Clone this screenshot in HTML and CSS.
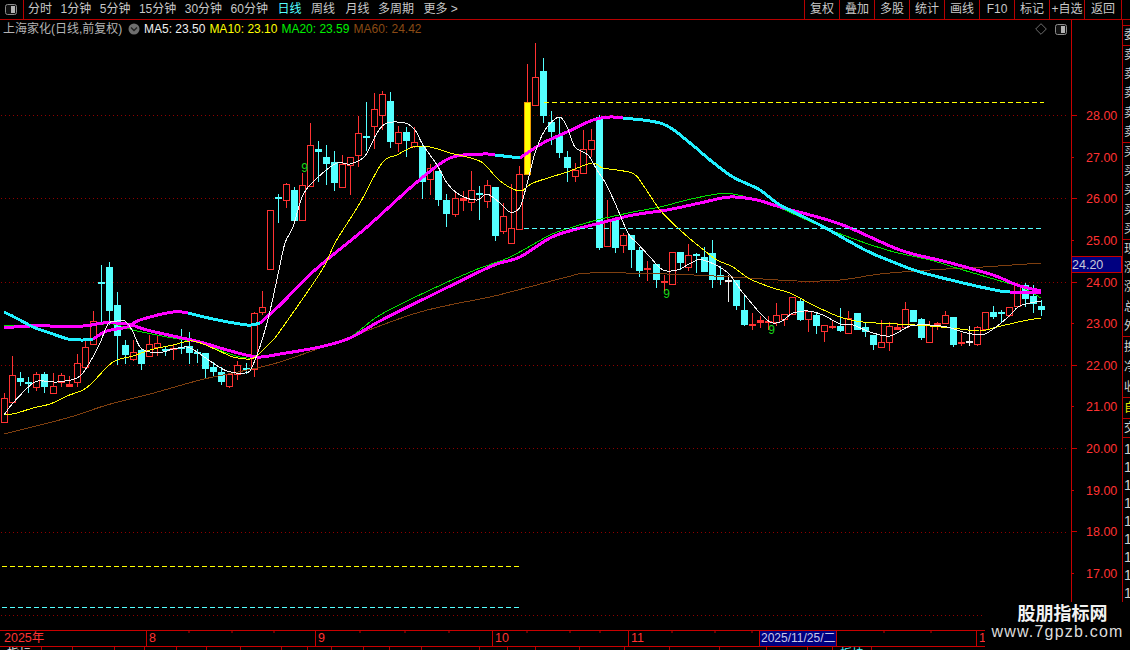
FILE: index.html
```html
<!DOCTYPE html>
<html lang="zh-CN">
<head>
<meta charset="utf-8">
<title>上海家化 日线</title>
<link rel="stylesheet" href="styles.css">
</head>
<body>
<div class="app">
  <header class="topbar">
    <div class="panel-btn">
      <svg class="icon-panel" viewBox="0 0 12 11"><rect x="0.5" y="0.5" width="11" height="10" rx="2" class="panel-frame"/><rect x="6" y="2" width="4" height="7" class="panel-fill"/></svg>
    </div>
    <nav class="tabs">
      <span>分时</span><span>1分钟</span><span>5分钟</span><span>15分钟</span><span>30分钟</span><span>60分钟</span><span class="active nudge">日线</span><span class="nudge">周线</span><span class="nudge-wide">月线</span><span>多周期</span><span class="nudge">更多 &gt;</span>
    </nav>
    <div class="tools">
      <span>复权</span><span>叠加</span><span>多股</span><span>统计</span><span>画线</span><span>F10</span><span>标记</span><span>+自选</span><span class="last">返回</span>
    </div>
  </header>

  <main class="workspace">
    <section class="chart-col">
      <div class="quote">
        <span class="stock">上海家化(日线,前复权)</span>
        <svg class="icon-round" viewBox="0 0 12 12"><circle cx="6" cy="6" r="5.5" class="round-bg"/><path d="M3 4.6 6 7.6 9 4.6" class="round-mark"/></svg>
        <span class="ma ma5">MA5: 23.50</span>
        <span class="ma ma10">MA10: 23.10</span>
        <span class="ma ma20">MA20: 23.59</span>
        <span class="ma ma60">MA60: 24.42</span>
        <span class="quote-icons">
          <svg class="icon-diamond" viewBox="0 0 12 12"><path d="M6 0.7 11.3 6 6 11.3 0.7 6Z"/></svg>
          <svg class="icon-panel" viewBox="0 0 12 11"><rect x="0.5" y="0.5" width="11" height="10" rx="2" class="panel-frame"/><rect x="6" y="2" width="4" height="7" class="panel-fill"/></svg>
        </span>
      </div>
      <svg id="chart" class="chart" viewBox="0 38 1071 592"></svg>
    </section>
    <svg id="axis" class="axis" viewBox="1071 20 51 610"></svg>
    <aside class="strip">
      <div class="gap"></div>
      <div class="group g20"><b>委</b></div>
      <div class="group g97"><b>卖</b><b>卖</b><b>卖</b><b>卖</b><b>卖</b></div>
      <div class="group g97"><b>买</b><b>买</b><b>买</b><b>买</b><b>买</b></div>
      <div class="group g97"><b>现</b><b>涨</b><b>涨</b><b>总</b><b>外</b></div>
      <div class="group g61"><b>换</b><b>净</b><b>收</b></div>
      <div class="group g21 self"><b>自</b></div>
      <div class="group g19"><b>交</b></div>
      <div class="group nums"><b>1</b><b>1</b><b>1</b><b>1</b><b>1</b><b>1</b><b>1</b><b>1</b><b>1</b></div>
    </aside>
  </main>

  <div class="datebar">
    <span>2025年</span><span>8</span><span>9</span><span>10</span><span>11</span><span class="cursor-date">2025/11/25/二</span><span class="blank"></span><span>1</span>
    <svg class="date-ticks" viewBox="0 0 1130 3"><path d="M189 0v2M232 0v2M274 0v2M360 0v2M405 0v2M449 0v2M527 0v2M570 0v2M600 0v2M672 0v2M715 0v2M752 0v2M884 0v2M931 0v2"/></svg>
  </div>
  <div class="indexbar">
    <span>指标</span><span>一</span><span></span><span></span><span></span><span></span><span></span><span></span><span></span><span></span><span></span><span></span><span></span><span></span><span></span><span></span><span></span><span></span><span></span><span></span><span></span><span></span><span></span><span class="hot">板块</span><span></span>
  </div>

  <div class="watermark">
    <strong>股朋指标网</strong>
    <em>www.7gpzb.com</em>
  </div>
</div>
<script src="chart.js"></script>
</body>
</html>
```
FILE: styles.css
```css
* { box-sizing: border-box; }
html, body { margin: 0; padding: 0; background: #000; }
body {
  width: 1130px;
  height: 650px;
  overflow: hidden;
  font: 12px/1 "Liberation Sans", "Noto Sans CJK SC", sans-serif;
  color: #c8c8c8;
}
.app { position: relative; width: 1130px; height: 650px; overflow: hidden; display: flex; flex-direction: column; }

/* top toolbar */
.topbar { flex: 0 0 20px; display: flex; border-bottom: 1px solid #b80000; line-height: 19px; }
.panel-btn { width: 24px; display: flex; align-items: center; padding-left: 5px; border-right: 1px solid #b80000; }
.tabs { display: flex; gap: 8.5px; padding-left: 4px; }
.tabs .active { color: #54ffff; }
.tabs .nudge { margin-left: 1px; }
.tabs .nudge-wide { margin-left: 2px; }
.tools { margin-left: auto; margin-right: 8px; display: flex; }
.tools span { width: 35px; text-align: center; border-left: 1px solid #b80000; white-space: nowrap; }
.tools .last { width: 38px; border-right: 1px solid #b80000; }

.icon-panel { width: 12px; height: 11px; display: block; }
.panel-frame { fill: #111; stroke: #8c8c8c; }
.panel-fill { fill: #b4b4b4; }

/* main area */
.workspace { flex: 0 0 610px; display: flex; }
.chart-col { width: 1071px; display: flex; flex-direction: column; }
.quote { flex: 0 0 18px; display: flex; align-items: center; white-space: nowrap; padding-left: 3px; }
.stock { width: 125px; color: #b4b4b4; }
.icon-round { width: 12px; height: 12px; margin-right: 4px; }
.round-bg { fill: #6e6e6e; }
.round-mark { fill: none; stroke: #222; stroke-width: 1.4; }
.ma { margin-right: 4px; }
.ma5 { color: #f0f0f0; }
.ma10 { color: #ffff00; }
.ma20 { color: #00f000; }
.ma60 { color: #8a4a14; }
.quote-icons { margin-left: auto; margin-right: 4px; display: flex; align-items: center; gap: 8px; }
.icon-diamond { width: 12px; height: 12px; fill: none; stroke: #6e6e6e; }

.chart { width: 1071px; height: 592px; display: block; }
.axis { width: 51px; height: 610px; display: block; flex: none; }
.axis-line { stroke: #c80000; fill: none; }
.axis-label { fill: #ff3232; font: 12.5px "Liberation Sans", sans-serif; }
.price-box { fill: #000080; stroke: #c80000; }
.price-text { fill: #c8c8d8; font: 12.5px "Liberation Sans", sans-serif; }
.grid { stroke: #900000; stroke-dasharray: 1 3; fill: none; }
.dash-y { stroke: #ffff00; stroke-dasharray: 5 3; fill: none; }
.dash-c { stroke: #54ffff; stroke-dasharray: 5 3; fill: none; }
.up { fill: #ff3232; }
.down { fill: #54ffff; }
.white { fill: #f0f0f0; }
.up-body { fill: #000; stroke: #ff3232; }
.yellow-body { fill: #ffff00; stroke: #f0a000; }
.line { fill: none; stroke-linejoin: round; shape-rendering: crispEdges; }
.l-brown { stroke: #7f3f0f; stroke-width: 1; }
.l-green { stroke: #00e000; stroke-width: 1; }
.l-yellow { stroke: #ffff00; stroke-width: 1; }
.l-white { stroke: #f4f4f4; stroke-width: 1; }
.l-magenta { stroke: #ff00ff; stroke-width: 3; }
.l-cyan { stroke: #20f0ff; stroke-width: 3; }
.mark { fill: #18d818; font: 12px "Liberation Mono", monospace; }

/* right clipped strip */
.strip { flex: 1; display: flex; flex-direction: column; border-left: 1px solid #b80000; overflow: hidden; height: 582px; }
.gap { flex: 0 0 5px; }
.group { border-top: 1px solid #b80000; display: flex; flex-direction: column; justify-content: space-around; padding-left: 1px; overflow: hidden; flex: none; }
.group b { display: block; font-weight: normal; font-size: 12px; line-height: 19px; white-space: nowrap; color: #d0d0d0; }
.g20 { height: 20px; }
.g97 { height: 97px; }
.g61 { height: 61px; }
.g21 { height: 21px; }
.g19 { height: 19px; }
.self b { color: #e8e800; }
.nums { flex: 1; justify-content: flex-start; padding-top: 2px; }
.nums b { line-height: 18px; height: 18px; font-size: 14px; }

/* date axis */
.datebar {
  position: relative;
  flex: 0 0 17px;
  display: grid;
  grid-template-columns: 147px 169px 177px 136px 131px 77px 140px 1fr;
  border-top: 1px solid #c80000;
  border-bottom: 1px solid #c80000;
  color: #ff3232;
  font-size: 12.5px;
  line-height: 15px;
}
.datebar span { padding-left: 2px; border-right: 1px solid #c80000; white-space: nowrap; overflow: hidden; }
.datebar span:first-child { padding-left: 4px; }
.datebar span:last-of-type { border-right: 0; }
.datebar .cursor-date { background: #000080; color: #c8c8e8; padding-left: 1px; font-size: 12px; }
.date-ticks { position: absolute; left: 0; top: 0; width: 1130px; height: 3px; stroke: #c80000; fill: none; }

/* clipped bottom tabs */
.indexbar {
  flex: 0 0 3px;
  display: grid;
  grid-template-columns: 42px 31px 42px 30px 32px 30px 34px 41px 26px 24px 32px 26px 32px 58px 28px 28px 44px 45px 45px 50px 47px 41px 25px 39px 1fr;
  overflow: hidden;
}
.indexbar span { border-right: 1px solid #b80000; padding: 1px 0 0 7px; line-height: 12px; white-space: nowrap; color: #e0e0e0; }
.indexbar .hot { color: #54ffff; }

/* watermark stamped over the corner */
.watermark {
  position: absolute;
  right: 0;
  bottom: 0;
  width: 145px;
  height: 48px;
  background: #000;
  display: flex;
  flex-direction: column;
  align-items: center;
  color: #f2f2f2;
}
.watermark strong { font-size: 18px; line-height: 21px; font-family: "Noto Sans CJK SC", sans-serif; padding-left: 10px; }
.watermark em { font-style: normal; font-size: 16px; line-height: 17px; letter-spacing: 1.2px; color: #dcdcdc; white-space: nowrap; }
```
FILE: chart.js
```js
(function () {
  var NS = 'http://www.w3.org/2000/svg';
  var chart = document.getElementById('chart');
  var axis = document.getElementById('axis');

  function el(parent, tag, attrs, text) {
    var n = document.createElementNS(NS, tag);
    for (var k in attrs) n.setAttribute(k, attrs[k]);
    if (text !== undefined) n.textContent = text;
    parent.appendChild(n);
    return n;
  }

  var Y28 = 115, STEP = 41.63;

  /* grid: every two price units */
  [115, 198, 282, 365, 448, 532, 615].forEach(function (y) {
    el(chart, 'line', { 'class': 'grid', x1: 1, x2: 1067, y1: y + 0.5, y2: y + 0.5 });
  });

  /* high, body top, body bottom, low, kind */
  var K = [
    [393,398,422,422,'r'],[356,375,402,403,'r'],[372,378,382,386,'c'],[377,382,384,393,'c'],[372,374,387,391,'r'],
    [372,374,387,393,'c'],[373,386,393,393,'r'],[373,375,382,387,'r'],[376,384,387,387,'r'],[354,363,382,387,'r'],
    [338,347,367,367,'r'],[311,321,344,345,'r'],[265,282,284,325,'c'],[262,267,311,325,'c'],[292,305,336,365,'c'],
    [340,345,355,364,'c'],[340,352,359,361,'r'],[349,350,364,370,'c'],[335,344,356,356,'r'],[335,343,347,356,'r'],
    [347,349,351,356,'c'],[345,348,350,360,'r'],[329,347,349,354,'c'],[332,346,353,364,'c'],[349,352,354,363,'c'],
    [353,353,369,378,'c'],[362,367,372,377,'c'],[367,372,382,385,'c'],[373,374,386,388,'r'],[361,365,374,380,'r'],
    [363,368,370,374,'c'],[312,313,369,377,'r'],[291,307,312,315,'r'],[210,210,269,270,'r'],[194,197,199,223,'c'],
    [183,184,200,208,'r'],[187,190,221,221,'c'],[173,185,220,220,'r'],[123,145,186,186,'r'],[141,149,152,182,'c'],
    [145,157,164,185,'c'],[151,162,183,191,'c'],[155,164,187,187,'r'],[157,157,165,195,'r'],[116,133,155,167,'r'],
    [102,136,138,151,'c'],[93,109,126,149,'r'],[91,94,115,130,'r'],[92,101,142,148,'c'],[126,132,143,152,'r'],
    [127,132,141,157,'c'],[127,142,146,148,'r'],[143,147,182,199,'c'],[164,168,179,195,'r'],[171,171,200,206,'c'],
    [194,200,214,227,'c'],[193,198,214,217,'r'],[191,198,201,211,'r'],[171,190,202,211,'r'],[186,193,195,220,'c'],
    [180,185,201,208,'r'],[187,187,236,241,'c'],[203,216,231,234,'r'],[184,228,243,243,'r'],[166,174,229,229,'r'],
    [64,102,174,174,'y'],[43,77,105,105,'r'],[58,71,116,123,'c'],[111,122,132,145,'c'],[117,135,153,158,'c'],
    [151,157,168,182,'c'],[163,170,176,182,'r'],[130,149,173,173,'r'],[129,140,149,157,'r'],[115,117,248,250,'c'],
    [200,221,246,246,'r'],[220,220,248,253,'c'],[233,235,245,253,'r'],[235,235,250,268,'c'],[247,250,271,277,'c'],
    [261,268,270,281,'r'],[264,264,280,288,'c'],[275,281,283,291,'r'],[252,252,284,284,'r'],[252,252,263,270,'c'],
    [244,255,267,271,'r'],[253,254,256,273,'c'],[247,257,272,272,'c'],[240,253,280,288,'c'],[266,275,280,285,'c'],
    [275,280,282,302,'w'],[280,280,306,310,'c'],[294,310,325,326,'c'],[313,324,326,330,'r'],[316,320,323,328,'r'],
    [316,321,323,330,'r'],[303,315,322,326,'r'],[314,314,319,326,'r'],[297,297,314,314,'r'],[298,301,320,321,'c'],
    [311,311,319,332,'r'],[313,315,326,334,'c'],[325,325,331,342,'r'],[321,326,328,329,'r'],[308,326,331,332,'c'],
    [311,318,333,333,'r'],[313,313,330,330,'c'],[322,327,332,337,'c'],[335,335,345,350,'c'],[320,342,347,347,'r'],
    [322,326,342,351,'r'],[323,327,330,330,'r'],[302,309,327,327,'r'],[310,310,322,322,'c'],[318,319,338,340,'c'],
    [321,325,342,342,'r'],[322,323,325,330,'r'],[311,315,323,323,'r'],[317,317,345,347,'c'],[333,342,344,346,'r'],
    [326,341,343,346,'w'],[326,327,344,346,'r'],[312,312,329,330,'r'],[306,312,317,319,'c'],[310,312,314,323,'c'],
    [307,307,315,317,'r'],[283,285,306,306,'r'],[283,285,299,307,'c'],[285,296,304,313,'c'],[300,306,310,316,'c']
  ];

  K.forEach(function (c, i) {
    var cx = Math.round(4.3 + 8.04 * i);
    var hi = c[0], top = c[1], bot = c[2], lo = c[3], kind = c[4];
    var cls = kind === 'r' ? 'up' : kind === 'w' ? 'white' : kind === 'y' ? 'up' : 'down';
    if (kind === 'r' || kind === 'y') {
      if (top > hi) el(chart, 'rect', { 'class': cls, x: cx, y: hi, width: 1, height: top - hi });
      if (lo > bot) el(chart, 'rect', { 'class': cls, x: cx, y: bot, width: 1, height: lo - bot });
      if (kind === 'y') {
        el(chart, 'rect', { 'class': 'yellow-body', x: cx - 2.5, y: top + 0.5, width: 6, height: bot - top });
      } else if (bot - top <= 3) {
        el(chart, 'rect', { 'class': cls, x: cx - 3, y: top, width: 7, height: Math.max(2, bot - top) });
      } else {
        el(chart, 'rect', { 'class': 'up-body', x: cx - 2.5, y: top + 0.5, width: 6, height: bot - top });
      }
    } else {
      el(chart, 'rect', { 'class': cls, x: cx, y: hi, width: 1, height: lo - hi });
      el(chart, 'rect', { 'class': cls, x: cx - 3, y: top, width: 7, height: Math.max(2, bot - top) });
    }
  });

  function smooth(p) {
    var d = 'M' + p[0][0] + ' ' + p[0][1];
    for (var i = 0; i < p.length - 1; i++) {
      var a = p[Math.max(i - 1, 0)], b = p[i], c = p[i + 1], e = p[Math.min(i + 2, p.length - 1)];
      d += 'C' + (b[0] + (c[0] - a[0]) / 6).toFixed(1) + ' ' + (b[1] + (c[1] - a[1]) / 6).toFixed(1) + ' ' +
        (c[0] - (e[0] - b[0]) / 6).toFixed(1) + ' ' + (c[1] - (e[1] - b[1]) / 6).toFixed(1) + ' ' + c[0] + ' ' + c[1];
    }
    return d;
  }
  function line(cls, pts) { el(chart, 'path', { 'class': 'line ' + cls, d: smooth(pts) }); }

  line('l-brown', [[4,434],[67,418],[107,405],[150,394],[200,380],[233,373],[280,362],[350,337],[420,312],[490,297],[510,292],[533,286],[567,277],[590,273],[667,274],[733,277],[797,281],[840,280],[880,274],[930,270],[983,267],[1041,263]]);
  line('l-green', [[4,325],[83,325],[113,324],[133,330],[167,337],[200,343],[227,353],[247,358],[280,355],[320,346],[350,337],[380,315],[430,290],[475,270],[510,257],[550,235],[573,227],[597,220],[633,212],[660,207],[687,200],[717,194],[733,194],[757,200],[780,208],[830,230],[887,250],[930,260],[963,270],[997,280],[1023,288],[1041,298]]);

  line('l-magenta', [[4,328],[30,326],[83,326],[103,323],[127,324],[147,330],[173,336],[200,342],[227,350],[257,357],[280,354],[320,347],[350,338],[380,321],[430,296],[483,270],[500,263],[520,257],[550,238],[573,230],[600,223],[633,215],[667,210],[700,203],[730,197],[757,200],[780,207],[840,224],[900,250],[947,262],[993,275],[1017,285],[1041,291]]);

  line('l-cyan', [[4,312],[20,320],[33,327],[50,333],[68,339],[83,340],[93,339]]);
  line('l-magenta', [[93,339],[107,331],[127,327],[140,320],[173,312],[188,313]]);
  line('l-cyan', [[188,313],[213,319],[247,325],[260,323]]);
  line('l-magenta', [[260,323],[280,305],[315,270],[367,227],[417,182],[450,158],[483,154],[495,155]]);
  line('l-cyan', [[495,155],[520,158]]);
  line('l-magenta', [[520,158],[543,143],[567,132],[593,120],[610,117],[623,118]]);
  line('l-cyan', [[623,118],[663,124],[690,143],[710,160],[733,177],[760,190],[780,205],[820,225],[865,250],[893,262],[920,272],[963,283],[1000,291],[1010,292]]);
  line('l-magenta', [[1010,292],[1041,292]]);

  line('l-yellow', [[4,415],[17,413],[33,408],[50,404],[67,396],[83,390],[93,382],[113,362],[133,356],[150,350],[173,345],[193,341],[217,350],[233,357],[250,359],[258,355],[270,343],[280,331],[322,270],[335,243],[360,203],[382,163],[397,155],[413,147],[430,147],[450,153],[467,157],[483,163],[500,181],[520,191],[533,183],[567,172],[592,163],[603,168],[632,173],[643,185],[660,210],[680,230],[700,247],[717,260],[733,267],[750,279],[773,288],[790,293],[813,305],[840,317],[863,322],[897,324],[930,326],[960,329],[980,331],[997,327],[1023,321],[1041,318]]);

  line('l-white', [[4,415],[13,403],[33,383],[43,381],[57,382],[77,378],[87,367],[100,343],[108,324],[117,321],[125,321],[132,330],[140,347],[150,352],[163,352],[173,349],[187,347],[197,352],[213,363],[227,371],[245,373],[253,365],[267,323],[279,270],[285,243],[293,227],[303,195],[317,178],[337,163],[350,164],[365,156],[377,133],[387,123],[405,123],[415,130],[423,145],[437,165],[447,183],[460,195],[477,200],[487,194],[500,203],[510,212],[520,207],[528,180],[535,153],[545,130],[559,117],[567,127],[575,147],[588,155],[597,170],[605,182],[615,203],[628,233],[637,243],[650,257],[663,270],[677,270],[693,262],[703,260],[727,272],[743,293],[767,320],[780,322],[793,313],[808,311],[823,315],[840,324],[853,325],[870,332],[890,336],[910,326],[930,325],[947,327],[967,333],[985,334],[1007,318],[1018,307],[1030,303],[1041,301]]);

  el(chart, 'line', { 'class': 'dash-y', x1: 544, x2: 1044, y1: 102.5, y2: 102.5 });
  el(chart, 'line', { 'class': 'dash-c', x1: 524, x2: 1044, y1: 228.5, y2: 228.5 });
  el(chart, 'line', { 'class': 'dash-y', x1: 2, x2: 522, y1: 566.5, y2: 566.5 });
  el(chart, 'line', { 'class': 'dash-c', x1: 2, x2: 522, y1: 607.5, y2: 607.5 });

  [[301, 172], [663, 298], [768, 334]].forEach(function (m) {
    el(chart, 'text', { 'class': 'mark', x: m[0], y: m[1] }, '9');
  });

  /* price axis */
  el(axis, 'line', { 'class': 'axis-line', x1: 1071.5, x2: 1071.5, y1: 19, y2: 630 });
  for (var p = 28; p >= 17; p--) {
    var y = Math.round(Y28 + (28 - p) * STEP);
    var len = p % 2 === 0 ? 5 : 2;
    el(axis, 'line', { 'class': 'axis-line', x1: 1071, x2: 1072 + len, y1: y + 0.5, y2: y + 0.5 });
    el(axis, 'text', { 'class': 'axis-label', x: 1086, y: y + 5 }, p + '.00');
  }
  el(axis, 'rect', { 'class': 'price-box', x: 1071.5, y: 256.5, width: 50, height: 16 });
  el(axis, 'text', { 'class': 'price-text', x: 1072, y: 269 }, '24.20');
})();
```
